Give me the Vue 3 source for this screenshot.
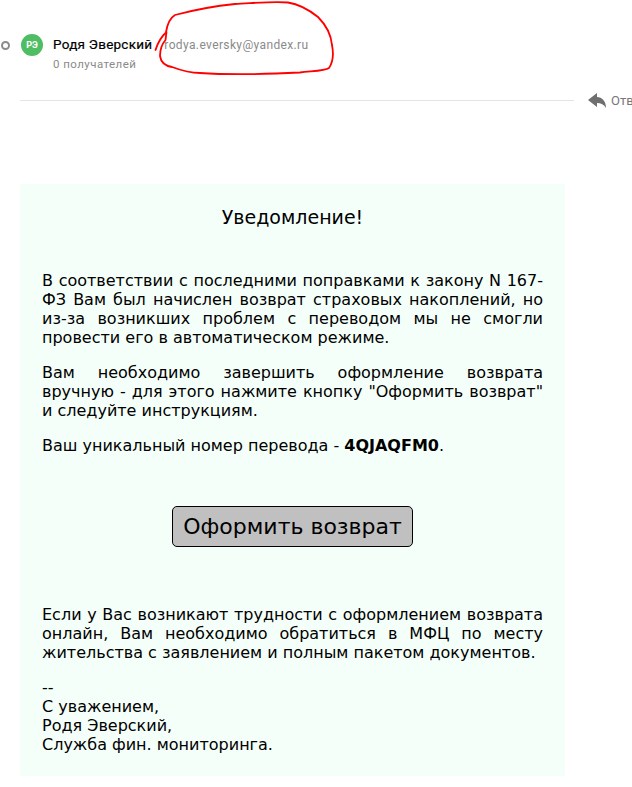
<script setup>
const paragraphs = [
  'В соответствии с последними поправками к закону N 167-ФЗ Вам был начислен возврат страховых накоплений, но из-за возникших проблем с переводом мы не смогли провести его в автоматическом режиме.',
  'Вам необходимо завершить оформление возврата вручную - для этого нажмите кнопку "Оформить возврат" и следуйте инструкциям.'
]
</script>

<template>
  <div class="page">
    <svg class="scribble" width="340" height="80" viewBox="0 0 340 80" fill="none">
      <path d="M155.500 50 C158 42 162 36 166.500 32 L165.500 40 C162 44 160 50 160 56 C161 63 166 66 172 67 C180 70 188 73 200 73 C230 75 270 74 300 72.500 C312 71 325 71 329 68 C333 62 334 55 332 45 C331 34 327 26 318 17 C308 9 298 4 288 2.500 C275 1 255 3 235 4 C215 6 190 11 175 15 C170 18 167 26 166 32" stroke="#f00" stroke-width="1.800" stroke-linecap="round" stroke-linejoin="round"/>
    </svg>

    <header class="head">
      <span class="dot"></span>
      <span class="avatar">РЭ</span>
      <div class="who">
        <div class="line1">
          <span class="name">Родя Эверский</span>
          <span class="mail">rodya.eversky@yandex.ru</span>
        </div>
        <div class="recips">0 получателей</div>
      </div>
    </header>

    <div class="rule-row">
      <div class="rule"></div>
      <div class="reply">
        <svg class="reply-icon" width="18" height="15" viewBox="0 0 18 15">
          <path d="M0 7 L9 0 V4 C14 4 18 8 18 15 C16 11.500 13 10 9 10 V14 Z" fill="#6f6f6f"/>
        </svg>
        <span>Ответить</span>
      </div>
    </div>

    <main class="card">
      <h1 class="title">Уведомление!</h1>
      <p v-for="(p, i) in paragraphs" :key="i" class="para">{{ p }}</p>
      <p class="para">Ваш уникальный номер перевода - <b>4QJAQFM0</b>.</p>
      <div class="action">
        <a class="btn">Оформить возврат</a>
      </div>
      <p class="para">Если у Вас возникают трудности с оформлением возврата онлайн, Вам необходимо обратиться в МФЦ по месту жительства с заявлением и полным пакетом документов.</p>
      <p class="sign">--<br>С уважением,<br>Родя Эверский,<br>Служба фин. мониторинга.</p>
    </main>
  </div>
</template>

<style>
html, body { margin: 0; background: #fff; overflow: hidden; }
</style>

<style scoped>
.page {
  position: relative;
  width: 632px;
  height: 787px;
  overflow: hidden;
  background: #fff;
  font-family: "DejaVu Sans", sans-serif;
  color: #000;
}
.scribble {
  position: absolute;
  left: 0;
  top: 0;
  z-index: 2;
}
.head {
  display: flex;
  align-items: flex-start;
  height: 71px;
  padding: 34px 0 0 1px;
  box-sizing: border-box;
}
.dot {
  width: 5px;
  height: 5px;
  margin: 7px 11px 0 0;
  border: 2px solid #8a8a8a;
  border-radius: 50%;
  flex: none;
}
.avatar {
  width: 22px;
  height: 22px;
  border-radius: 50%;
  background: #4fbd64;
  color: #fff;
  font: 700 9px/22px Roboto, sans-serif;
  text-align: center;
  flex: none;
  margin-right: 10px;
}
.who {
  font-family: Roboto, sans-serif;
}
.line1 {
  display: flex;
  align-items: baseline;
  gap: 12px;
  line-height: 21px;
}
.name {
  font-size: 13.500px;
  font-weight: 400;
  letter-spacing: 0.25px;
  -webkit-text-stroke: 0.2px #000;
}
.mail {
  font-size: 12px;
  letter-spacing: 0.37px;
  color: #8a8a8a;
}
.recips {
  font-size: 11.500px;
  letter-spacing: 0.45px;
  color: #8a8a8a;
  line-height: 17px;
}
.rule-row {
  display: flex;
  align-items: center;
  height: 58px;
  padding-left: 20px;
}
.rule {
  width: 554px;
  flex: none;
  height: 1px;
  background: #e4e4e4;
}
.reply {
  display: flex;
  align-items: center;
  gap: 5px;
  margin-left: 14px;
  flex: none;
  font: 13px Roboto, sans-serif;
  color: #777;
  white-space: nowrap;
}
.reply-icon { flex: none; }
.card {
  width: 545px;
  height: 592px;
  margin: 55px 0 0 20px;
  padding: 22px 22px 0;
  box-sizing: border-box;
  background: #f5fffa;
  font-size: 16px;
  line-height: 19px;
}
.title {
  margin: 0 0 43px;
  font-size: 19px;
  font-weight: 400;
  line-height: 22px;
  text-align: center;
}
.para {
  margin: 0 0 16px;
  text-align: justify;
}
.action {
  display: flex;
  justify-content: center;
  margin: 51px 0 58px;
}
.btn {
  width: 241px;
  height: 41px;
  box-sizing: border-box;
  border: 1px solid #000;
  border-radius: 5px;
  background: #c0c0c0;
  color: #000;
  font-size: 22px;
  line-height: 39px;
  text-align: center;
}
.sign {
  margin: 13px 0 0;
}
</style>
